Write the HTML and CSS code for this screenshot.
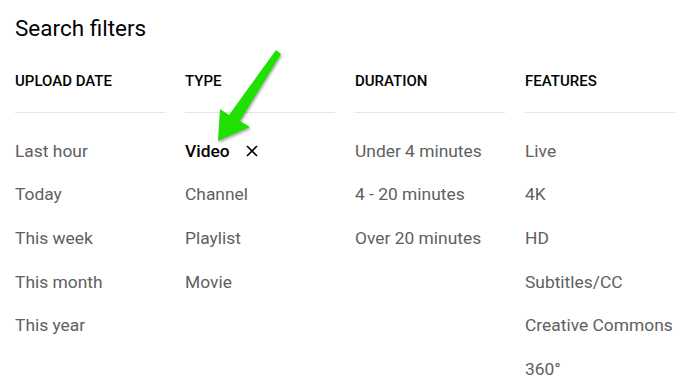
FILE: index.html
```html
<!DOCTYPE html>
<html lang="en">

<head>
    <meta charset="UTF-8">
    <title>Search filters</title>
    <link rel="stylesheet" href="styles.css">
</head>

<body>

    <header>
        <h1>Search filters</h1>
    </header>

    <main class="filters">
        <section class="group">
            <h4>Upload date</h4>
            <ul>
                <li>Last hour</li>
                <li>Today</li>
                <li>This week</li>
                <li>This month</li>
                <li>This year</li>
            </ul>
        </section>
        <section class="group">
            <h4>Type</h4>
            <ul>
                <li class="valgt">Video
                    <svg class="fjern" width="12" height="12" viewBox="0 0 12 12">
                        <path d="M1 1 L11 11 M11 1 L1 11" stroke="#030303" stroke-width="1.6" fill="none" />
                    </svg>
                </li>
                <li>Channel</li>
                <li>Playlist</li>
                <li>Movie</li>
            </ul>
        </section>
        <section class="group">
            <h4>Duration</h4>
            <ul>
                <li>Under 4 minutes</li>
                <li>4 - 20 minutes</li>
                <li>Over 20 minutes</li>
            </ul>
        </section>
        <section class="group">
            <h4>Features</h4>
            <ul>
                <li>Live</li>
                <li>4K</li>
                <li>HD</li>
                <li>Subtitles/CC</li>
                <li>Creative Commons</li>
                <li>360&deg;</li>
            </ul>
        </section>
    </main>

    <!-- annotation arrow -->
    <svg class="pil" width="693" height="388" viewBox="0 0 693 388">
        <polygon points="276,50 281,54 240,121 250,127 218,141 220,109 229,115" fill="#1fe000" />
    </svg>

</body>

</html>
```

FILE: styles.css
```css
body {
    margin: 0;
    padding: 0 15px;
    background-color: white;
    font-family: Roboto, "Liberation Sans", sans-serif;
    color: #030303;
    overflow: hidden;
}

h1 {
    margin: 14px 0 0;
    font-size: 22.5px;
    line-height: 28px;
    font-weight: 400;
}

.filters {
    display: grid;
    grid-template-columns: repeat(4, 150px);
    grid-gap: 20px;
}

.group h4 {
    margin: 0;
    padding-top: 31px;
    padding-bottom: 23px;
    font-size: 15px;
    line-height: 16px;
    font-weight: 500;
    text-transform: uppercase;
    border-bottom: 1px solid #e5e5e5;
}

.group ul {
    list-style: none;
    margin: 0;
    padding: 16px 0 0;
}

.group li {
    height: 43.6px;
    display: flex;
    align-items: center;
    font-size: 17.4px;
    color: #606060;
    white-space: nowrap;
}

.group li.valgt {
    color: #030303;
    font-weight: 500;
}

.fjern {
    margin-left: 16px;
}

.pil {
    position: absolute;
    top: 0;
    left: 0;
    pointer-events: none;
    filter: drop-shadow(1px 2px 1px rgba(0, 0, 0, .3));
}
```
